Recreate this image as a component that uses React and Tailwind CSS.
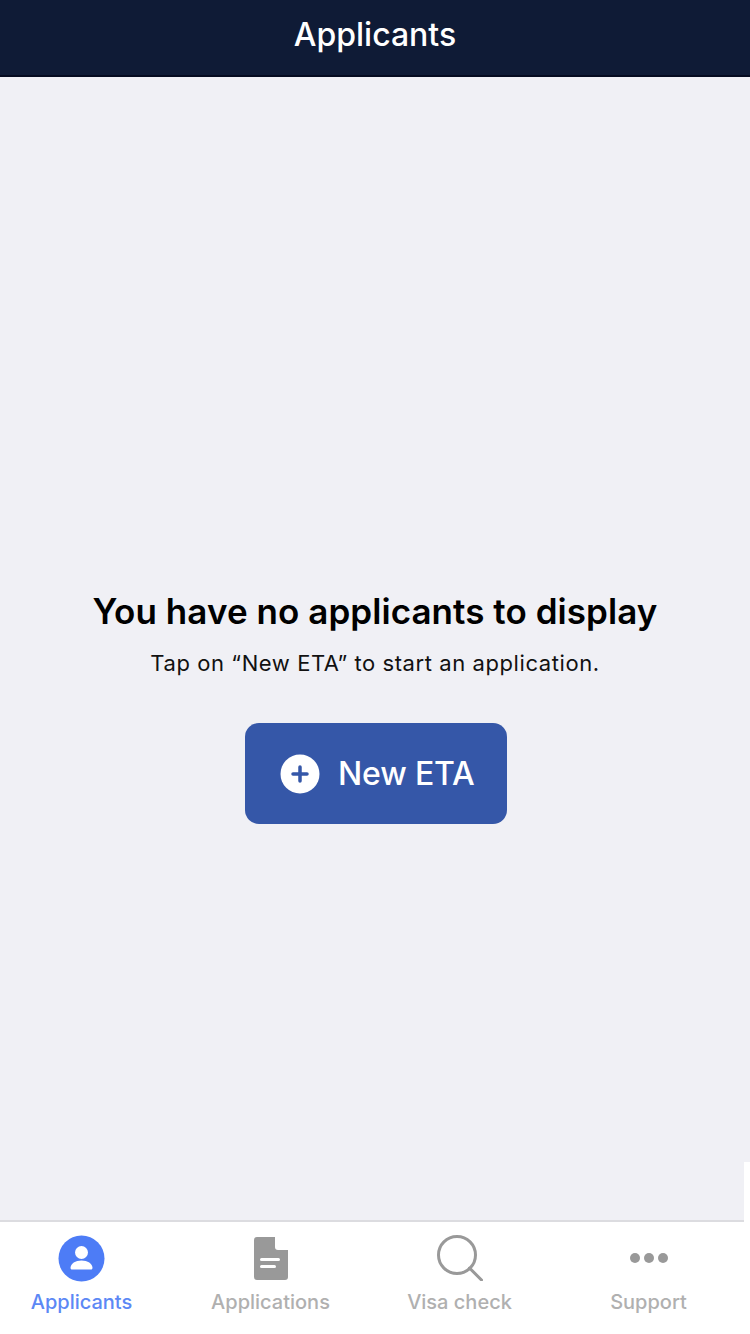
import React from "react";

const PersonIcon = () => (
  <svg width="47" height="47" viewBox="0 0 47 47">
    <circle cx="23.5" cy="23.5" r="23" fill="#4d7cf6" />
    <circle cx="23.5" cy="17.5" r="6.5" fill="#fff" />
    <path d="M12.5 33c0-4.5 5-7.5 11-7.5s11 3 11 7.5c0 .8-.6 1.5-1.5 1.5H14c-.9 0-1.5-.7-1.5-1.5z" fill="#fff" />
  </svg>
);

const DocIcon = () => (
  <svg width="34" height="43" viewBox="0 0 34 43">
    <path
      d="M3 0h18l13 13v27a3 3 0 0 1-3 3H3a3 3 0 0 1-3-3V3a3 3 0 0 1 3-3z"
      fill="#999999"
    />
    <path d="M21 -1v11a3 3 0 0 0 3 3h11z" fill="#fff" />
    <rect x="6" y="21" width="20" height="3" rx="1.5" fill="#fff" />
    <rect x="6" y="28" width="16" height="3" rx="1.5" fill="#fff" />
  </svg>
);

const SearchIcon = () => (
  <svg width="46" height="46" viewBox="0 0 46 46" fill="none" stroke="#999999" strokeWidth="3">
    <circle cx="20" cy="20" r="18.5" />
    <path d="M32.5 33l12 12" strokeLinecap="round" />
  </svg>
);

const DotsIcon = () => (
  <svg width="40" height="12" viewBox="0 0 40 12">
    <circle cx="6" cy="6" r="5" fill="#999999" />
    <circle cx="20" cy="6" r="5" fill="#999999" />
    <circle cx="34" cy="6" r="5" fill="#999999" />
  </svg>
);

const PlusIcon = () => (
  <svg width="40" height="40" viewBox="0 0 40 40">
    <circle cx="20" cy="20" r="19.5" fill="#fff" />
    <path d="M20 13v14M13 20h14" stroke="#3557a8" strokeWidth="3.5" strokeLinecap="round" />
  </svg>
);

const tabs = [
  { label: "Applicants", icon: <PersonIcon />, color: "text-[#5c88f5]" },
  { label: "Applications", icon: <DocIcon />, color: "text-[#b0b0b0]" },
  { label: "Visa check", icon: <SearchIcon />, color: "text-[#b0b0b0]" },
  { label: "Support", icon: <DotsIcon className="mt-[2px]" />, color: "text-[#b0b0b0]" },
];

const App = () => {
  return (
    <div className="relative flex h-[1334px] w-[750px] flex-col overflow-hidden bg-white font-['Inter',sans-serif]">
      <header className="flex h-[77px] shrink-0 items-center justify-center border-b-2 border-[#050b20] bg-[#0f1b36] pb-[6px]">
        <h1 className="text-[32px] leading-none font-medium text-white">Applicants</h1>
      </header>

      <main className="flex flex-1 flex-col items-center bg-[#f0f0f5] pt-[512px]">
        <h2 className="text-[35px] leading-[44px] font-semibold tracking-[0.06px] text-black">
          You have no applicants to display
        </h2>
        <p className="mt-[16px] text-[22px] leading-[28px] tracking-[0.58px] text-[#111111]">
          Tap on “New ETA” to start an application.
        </p>
        <button className="mt-[46px] ml-[2px] flex h-[101px] w-[262px] items-center gap-[18px] rounded-[14px] bg-[#3557a8] pl-[35px]">
          <PlusIcon />
          <span className="text-[32px] font-medium tracking-[-0.15px] text-white">New ETA</span>
        </button>
      </main>

      <nav className="h-[114px] shrink-0 border-t-2 border-[#dcdce0] bg-white">
        <div className="-ml-[13px] grid w-[756px] grid-cols-4">
          {tabs.map((tab) => (
            <div key={tab.label} className="flex flex-col items-center">
              <div className="flex h-[68px] items-center justify-center pt-[4px]">{tab.icon}</div>
              <span className={`text-[20px] leading-[24px] font-medium ${tab.color}`}>
                {tab.label}
              </span>
            </div>
          ))}
        </div>
      </nav>

      {/* white sliver on the right edge of the screenshot */}
      <div className="absolute top-[1162px] right-0 h-[62px] w-[6px] bg-white" />
    </div>
  );
};

export default App;
